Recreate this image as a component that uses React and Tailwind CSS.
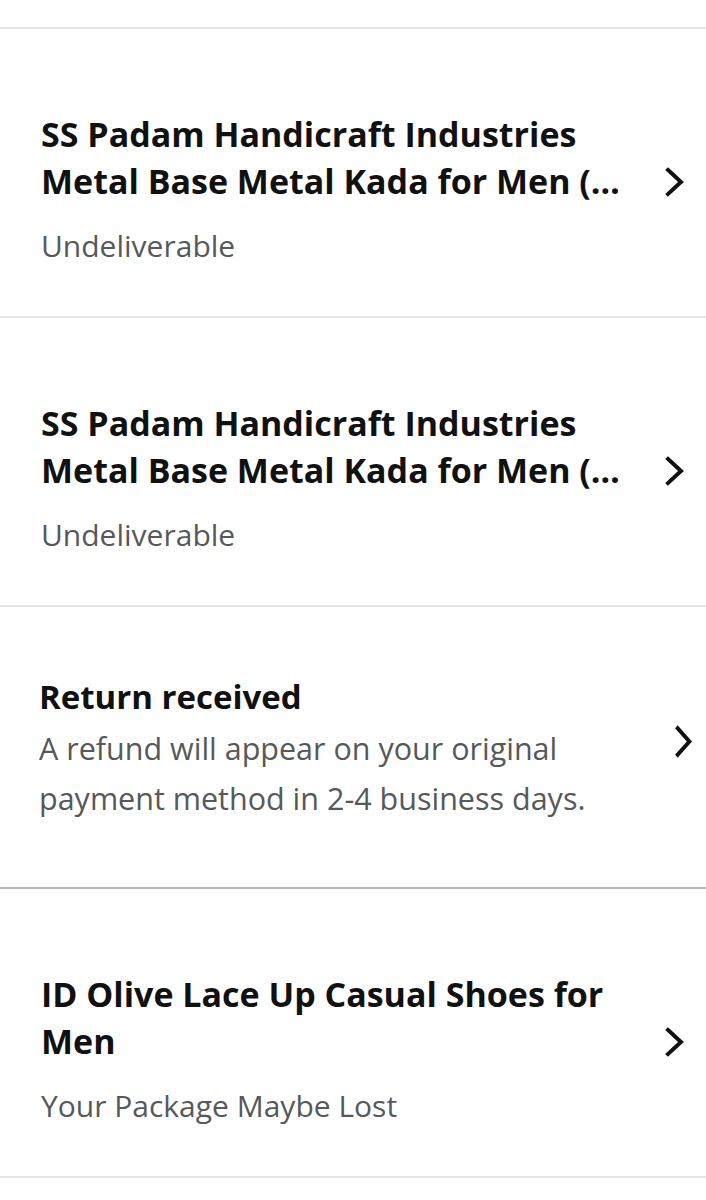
const Chevron = ({ className }) => (
  <svg viewBox="0 0 20 30" className={className} fill="none" stroke="#111111" strokeWidth="4" strokeLinecap="square" preserveAspectRatio="none">
    <path d="M3 3 L16 15 L3 27" />
  </svg>
)

const ProductRow = ({ lines, status }) => (
  <div className="flex items-start pl-[41px] pr-[21px] pt-[82px] pb-[50px]">
    <div className="flex-1 min-w-0">
      <div className="text-[34px] leading-[47px] font-bold text-[#111111] whitespace-nowrap">
        {lines.map((line, i) => (
          <div key={i}>{line}</div>
        ))}
      </div>
      <div className="mt-[21px] text-[30px] leading-[40px] text-[#565959]">{status}</div>
    </div>
    <Chevron className="ml-[4px] mt-[56px] w-[20px] h-[30px] shrink-0" />
  </div>
)

const Divider = ({ dark }) => <div className={dark ? "h-[2px] bg-[#b8b8b8]" : "h-[2px] bg-[#e5e5e5]"} />

const kada = ["SS Padam Handicraft Industries", "Metal Base Metal Kada for Men (…"]

export default function App() {
  return (
    <div className="w-[706px] h-[1200px] bg-white overflow-hidden" style={{ fontFamily: '"Open Sans", "Noto Sans", sans-serif' }}>
      <div className="h-[27px]" />
      <Divider />
      <ProductRow lines={kada} status="Undeliverable" />
      <Divider />
      <ProductRow lines={kada} status="Undeliverable" />
      <Divider />
      <div className="flex items-start pl-[39px] pr-[13px] pt-[68px] h-[280px]">
        <div className="flex-1">
          <div className="text-[33px] leading-[44px] font-bold text-[#111111]">Return received</div>
          <div className="mt-[4px] text-[30.5px] leading-[50px] text-[#565959]">
            A refund will appear on your original
            <br />
            payment method in 2-4 business days.
          </div>
        </div>
        <Chevron className="mt-[50px] w-[18px] h-[33px] shrink-0" />
      </div>
      <Divider dark />
      <ProductRow lines={["ID Olive Lace Up Casual Shoes for", "Men"]} status="Your Package Maybe Lost" />
      <Divider />
    </div>
  )
}
